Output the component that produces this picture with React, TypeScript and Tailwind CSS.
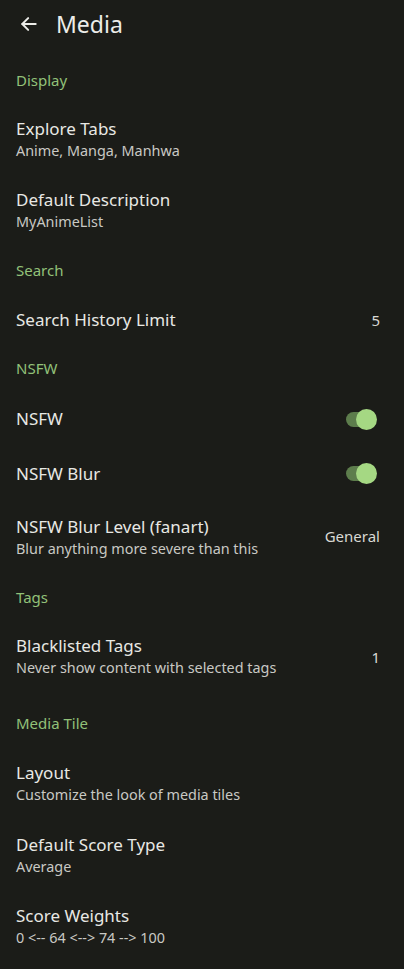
import React from "react";

const font = { fontFamily: '"Noto Sans", "Open Sans", sans-serif' };

function Header({ label, extra = "" }: { label: string; extra?: string }) {
  return (
    <div className={`h-12 flex items-center px-4 text-[15px] text-[#92c178] ${extra}`}>{label}</div>
  );
}

function Item({ title, sub, right, extra = "" }: { title: string; sub?: string; right?: React.ReactNode; extra?: string }) {
  return (
    <div className={`flex items-center justify-between pl-4 pr-6 ${sub ? "py-[14px]" : ""} ${extra}`}>
      <div className="flex flex-col">
        <div className="text-[17px] leading-[22px] text-[#e8e8e4]">{title}</div>
        {sub && <div className="text-[14.4px] leading-[21px] text-[#c9c9c4]">{sub}</div>}
      </div>
      {right}
    </div>
  );
}

function Switch() {
  return (
    <div className="relative w-[31px] h-[21px] mr-[3px]">
      <div className="absolute left-0 top-[3px] w-[28px] h-[15px] rounded-full bg-[#5d7d4c]" />
      <div className="absolute right-0 top-0 w-[21px] h-[21px] rounded-full bg-[#a5d883]" />
    </div>
  );
}

export default function App() {
  return (
    <div className="w-[404px] h-[969px] bg-[#1b1c18] overflow-hidden" style={font}>
      <div className="h-[48px] flex items-center pl-[19px]">
        <svg width="20" height="20" viewBox="0 0 24 24" fill="none" stroke="#ecece8" strokeWidth="2.4" strokeLinecap="round" strokeLinejoin="round">
          <path d="M20 12H4" />
          <path d="M11 5l-7 7 7 7" />
        </svg>
        <div className="ml-[17px] text-[23px] text-[#ecece8] leading-none">Media</div>
      </div>
      <Header label="Display" extra="mt-2" />
      <Item title="Explore Tabs" sub="Anime, Manga, Manhwa" />
      <Item title="Default Description" sub="MyAnimeList" />
      <Header label="Search" />
      <Item title="Search History Limit" extra="h-[52px]" right={<div className="text-[15px] text-[#d9d9d4]">5</div>} />
      <Header label="NSFW" extra="-mt-[2px]" />
      <Item title="NSFW" extra="h-[54px]" right={<Switch />} />
      <Item title="NSFW Blur" extra="h-[55px]" right={<Switch />} />
      <Item
        title="NSFW Blur Level (fanart)"
        sub="Blur anything more severe than this"
        extra="pt-[15px]"
        right={<div className="text-[15px] text-[#d9d9d4] -mt-[3px]">General</div>}
      />
      <Header label="Tags" />
      <Item
        title="Blacklisted Tags"
        sub="Never show content with selected tags"
        extra="pb-[21px]"
        right={<div className="text-[15px] text-[#d9d9d4] mt-[1px]">1</div>}
      />
      <Header label="Media Tile" />
      <Item title="Layout" sub="Customize the look of media tiles" extra="pt-[15px] pb-[15px]" />
      <Item title="Default Score Type" sub="Average" />
      <Item title="Score Weights" sub="0 <-- 64 <--> 74 --> 100" />
    </div>
  );
}
